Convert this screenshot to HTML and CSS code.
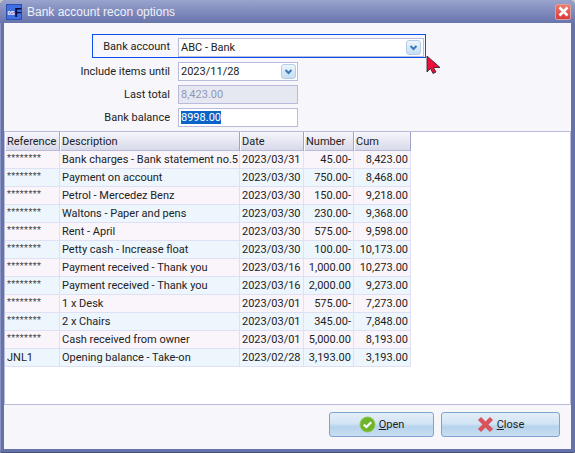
FILE: index.html
```html
<!DOCTYPE html>
<html lang="en">
<head>
    <meta charset="UTF-8">
    <title>Bank account recon options</title>
    <link rel="stylesheet" href="styles.css">
</head>
<body>
<div class="window">
    <div class="titlebar">
        <svg class="app-icon" width="16" height="16" viewBox="0 0 16 16">
            <rect x="0.5" y="0.5" width="15" height="15" fill="#3f6fe0" stroke="#2a4fb0"/>
            <text x="1.5" y="10.5" font-size="6" font-weight="bold" font-family="Liberation Sans, sans-serif" fill="#ffffff">0S</text>
            <text x="8.5" y="13" font-size="12" font-weight="bold" font-family="Liberation Sans, sans-serif" fill="#0a0a30">F</text>
        </svg>
        <span class="title">Bank account recon options</span>
        <button class="close-x" type="button">
            <svg width="11" height="11" viewBox="0 0 11 11">
                <path d="M1.5 1.5 L9.5 9.5 M9.5 1.5 L1.5 9.5" stroke="#ffffff" stroke-width="2.6"/>
            </svg>
        </button>
    </div>

    <div class="content">
        <form class="options">
            <div class="focus-row">
                <label class="label-focus">Bank account</label>
                <div class="field field-wide">
                    <span class="value">ABC - Bank</span>
                    <span class="drop">
                        <svg width="9" height="6" viewBox="0 0 9 6"><path d="M1.5 1 L4.5 4 L7.5 1" fill="none" stroke="#3a78b8" stroke-width="2"/></svg>
                    </span>
                </div>
            </div>
            <div class="row">
                <label>Include items until</label>
                <div class="field">
                    <span class="value">2023/11/28</span>
                    <span class="drop">
                        <svg width="9" height="6" viewBox="0 0 9 6"><path d="M1.5 1 L4.5 4 L7.5 1" fill="none" stroke="#3a78b8" stroke-width="2"/></svg>
                    </span>
                </div>
            </div>
            <div class="row">
                <label>Last total</label>
                <div class="field field-disabled"><span class="value">8,423.00</span></div>
            </div>
            <div class="row">
                <label>Bank balance</label>
                <div class="field"><span class="value"><span class="selected">8998.00</span></span></div>
            </div>
        </form>

        <div class="grid">
            <table class="items">
                <colgroup>
                    <col class="col-ref"><col class="col-desc"><col class="col-date"><col class="col-num"><col class="col-cum">
                </colgroup>
                <thead>
                    <tr><th>Reference</th><th>Description</th><th>Date</th><th>Number</th><th>Cum</th></tr>
                </thead>
                <tbody>
                    <tr><td class="hidden-ref">********</td><td>Bank charges - Bank statement no.5</td><td>2023/03/31</td><td class="num">45.00-</td><td class="num">8,423.00</td></tr>
                    <tr><td class="hidden-ref">********</td><td>Payment on account</td><td>2023/03/30</td><td class="num">750.00-</td><td class="num">8,468.00</td></tr>
                    <tr><td class="hidden-ref">********</td><td>Petrol - Mercedez Benz</td><td>2023/03/30</td><td class="num">150.00-</td><td class="num">9,218.00</td></tr>
                    <tr><td class="hidden-ref">********</td><td>Waltons - Paper and pens</td><td>2023/03/30</td><td class="num">230.00-</td><td class="num">9,368.00</td></tr>
                    <tr><td class="hidden-ref">********</td><td>Rent - April</td><td>2023/03/30</td><td class="num">575.00-</td><td class="num">9,598.00</td></tr>
                    <tr><td class="hidden-ref">********</td><td>Petty cash - Increase float</td><td>2023/03/30</td><td class="num">100.00-</td><td class="num">10,173.00</td></tr>
                    <tr><td class="hidden-ref">********</td><td>Payment received - Thank you</td><td>2023/03/16</td><td class="num">1,000.00</td><td class="num">10,273.00</td></tr>
                    <tr><td class="hidden-ref">********</td><td>Payment received - Thank you</td><td>2023/03/16</td><td class="num">2,000.00</td><td class="num">9,273.00</td></tr>
                    <tr><td class="hidden-ref">********</td><td>1 x Desk</td><td>2023/03/01</td><td class="num">575.00-</td><td class="num">7,273.00</td></tr>
                    <tr><td class="hidden-ref">********</td><td>2 x Chairs</td><td>2023/03/01</td><td class="num">345.00-</td><td class="num">7,848.00</td></tr>
                    <tr><td class="hidden-ref">********</td><td>Cash received from owner</td><td>2023/03/01</td><td class="num">5,000.00</td><td class="num">8,193.00</td></tr>
                    <tr><td>JNL1</td><td>Opening balance - Take-on</td><td>2023/02/28</td><td class="num">3,193.00</td><td class="num">3,193.00</td></tr>
                </tbody>
            </table>
        </div>

        <div class="footer">
            <button class="btn btn-open" type="button">
                <svg width="17" height="17" viewBox="0 0 17 17">
                    <circle cx="8.5" cy="8.5" r="7.5" fill="#6fb52c" stroke="#8cc84b"/>
                    <path d="M4.8 8.6 L7.4 11 L12.2 6.2" fill="none" stroke="#ffffff" stroke-width="2.2"/>
                </svg>
                <span><u>O</u>pen</span>
            </button>
            <button class="btn btn-close" type="button">
                <svg width="17" height="17" viewBox="0 0 17 17">
                    <path d="M2.5 2.5 L14.5 14.5 M14.5 2.5 L2.5 14.5" stroke="#d9535a" stroke-width="4.4"/>
                </svg>
                <span><u>C</u>lose</span>
            </button>
        </div>
    </div>

    <svg class="cursor" width="15" height="19" viewBox="0 0 15 19">
        <path d="M1 1 L1 17 L4.5 13.5 L7 18.5 L10 17 L7.5 12.5 L14 12.5 Z" fill="#ee0f3c" stroke="#222" stroke-width="0.8"/>
    </svg>
</div>
</body>
</html>
```

FILE: styles.css
```css
html, body {
    margin: 0;
    height: 100%;
    background-color: #c8c8c8;
}
body {
    font-family: Roboto, "Liberation Sans", sans-serif;
    font-size: 11px;
    color: #222;
    overflow: hidden;
}

/* window chrome */
.window {
    position: relative;
    box-sizing: border-box;
    height: 453px;
    display: flex;
    flex-direction: column;
    border-radius: 6px 6px 2px 2px;
    background-color: #6673ab;
    padding: 0 4px 4px 4px;
    box-shadow: inset 0 -1px 0 #4a5178, inset 1px 0 0 #8a94c0;
}
.titlebar {
    height: 23px;
    margin: 0 -4px;
    padding: 0 5px 0 6px;
    display: flex;
    align-items: center;
    gap: 5px;
    border-radius: 6px 6px 0 0;
    background: linear-gradient(#9aa4cd, #8590c0 40%, #6875ac);
}
.app-icon {
    flex: none;
}
.title {
    flex: 1;
    color: #eef1fa;
    font-family: "Liberation Sans", sans-serif;
    font-size: 12px;
}
.close-x {
    width: 16px;
    height: 16px;
    padding: 0;
    margin-right: -1px;
    display: flex;
    align-items: center;
    justify-content: center;
    border: 1px solid #d9a0a0;
    border-radius: 2px;
    background: linear-gradient(#ef7a6c, #d93a3a);
}

/* main area */
.content {
    flex: 1;
    min-height: 0;
    display: flex;
    flex-direction: column;
    background-color: #f7f7fb;
}
.options {
    padding-top: 11px;
    display: flex;
    flex-direction: column;
    gap: 4px;
    height: 108px;
    flex: none;
    box-sizing: border-box;
}
.focus-row {
    box-sizing: border-box;
    width: 334px;
    height: 24px;
    flex: none;
    margin-left: 88px;
    padding-top: 3px;
    display: flex;
    gap: 8px;
    border: 1px solid #0a50f0;
}
.label-focus {
    width: 77px;
    text-align: right;
    line-height: 17px;
}
.row {
    display: flex;
    gap: 8px;
}
.row label {
    width: 166px;
    text-align: right;
    line-height: 19px;
}
.field {
    box-sizing: border-box;
    width: 120px;
    height: 19px;
    display: flex;
    align-items: center;
    justify-content: space-between;
    padding: 0 1px 0 2px;
    border: 1px solid #b8bbdc;
    background-color: #fff;
}
.field-wide {
    width: 246px;
    padding-right: 2px;
}
.field-disabled {
    background-color: #e6e8f1;
    color: #8f97b8;
}
.selected {
    background-color: #0a64c8;
    color: #fff;
}
.drop {
    box-sizing: border-box;
    width: 15px;
    height: 15px;
    display: flex;
    align-items: center;
    justify-content: center;
    border: 1px solid #b4cde8;
    border-radius: 3px;
    background: linear-gradient(#eef5fb, #c6def3);
}

/* items grid */
.grid {
    flex: 1;
    min-height: 0;
    border: 1px solid #b8bbdc;
    background-color: #fff;
}
.items {
    border-collapse: separate;
    border-spacing: 0;
    table-layout: fixed;
    width: 406px;
}
.col-ref { width: 55px; }
.col-desc { width: 180px; }
.col-date { width: 64px; }
.col-num { width: 50px; }
.col-cum { width: 57px; }
.items th {
    box-sizing: border-box;
    height: 19px;
    padding: 0 1px;
    font-weight: normal;
    text-align: left;
    white-space: nowrap;
    background: linear-gradient(#f6f6fb, #d8daea);
    border-right: 1px solid #9ea3c8;
    border-left: 1px solid #fff;
    border-bottom: 1px solid #b8bbdc;
}
.items td {
    box-sizing: border-box;
    height: 18px;
    padding: 0 2px;
    white-space: nowrap;
    overflow: hidden;
    border-right: 1px solid #dfe0f4;
    border-bottom: 1px solid #dfe0f4;
}
.items tbody tr:nth-child(odd) td {
    background-color: #faf5fa;
}
.items tbody tr:nth-child(even) td {
    background-color: #edf6fd;
}
.items .num {
    text-align: right;
}
.items .hidden-ref {
    font-size: 9px;
    letter-spacing: 0.4px;
    color: #444;
    vertical-align: top;
    line-height: 14px;
}

/* bottom buttons */
.footer {
    height: 44px;
    flex: none;
    box-sizing: border-box;
    padding: 7px 11px 0 0;
    display: flex;
    justify-content: flex-end;
    gap: 7px;
}
.btn {
    box-sizing: border-box;
    height: 25px;
    padding: 0;
    display: flex;
    align-items: center;
    justify-content: center;
    gap: 3px;
    font-family: inherit;
    font-size: 11px;
    color: #222;
    border: 1px solid #7ea3cc;
    border-radius: 3px;
    background: linear-gradient(#e4eef8, #d2e4f4 45%, #b6d3ec 60%, #c8def2);
}
.btn-open { width: 105px; }
.btn-close { width: 119px; }

/* mouse pointer on top of the form */
.cursor {
    position: absolute;
    left: 426px;
    top: 55px;
}
```
